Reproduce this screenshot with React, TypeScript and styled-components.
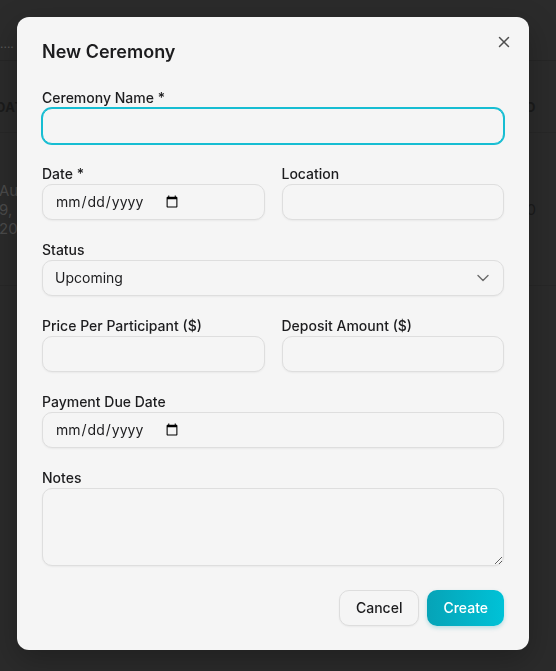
import React, { ReactElement } from "react";
import styled, { createGlobalStyle } from "styled-components";
import { X, ChevronDown } from "lucide-react";

const GlobalStyle = createGlobalStyle`
  html, body {
    margin: 0;
    padding: 0;
    background: #2b2b2b;
    font-family: Inter, "Liberation Sans", sans-serif;
    overflow: hidden;
  }
`;

function Field({
  label,
  children,
}: {
  label: string;
  children: React.ReactNode;
}): ReactElement {
  return (
    <FieldBox>
      <Label>{label}</Label>
      {children}
    </FieldBox>
  );
}

function App(): ReactElement {
  return (
    <>
      <GlobalStyle />
      <Page>
        <TopBar>
          <Dots>....</Dots>
        </TopBar>
        <HeadRow>
          <HeadCell>DATE</HeadCell>
          <HeadCell>PAID</HeadCell>
        </HeadRow>
        <DataRow>
          <DateCell>
            Aug
            <br />
            9,
            <br />
            2025
          </DateCell>
          <NumCell>0</NumCell>
        </DataRow>
      </Page>

      <Overlay>
        <Modal>
          <CloseButton aria-label="Close">
            <X size={18} strokeWidth={2} />
          </CloseButton>
          <Title>New Ceremony</Title>

          <Form>
            <Field label="Ceremony Name *">
              <Input type="text" $focused />
            </Field>

            <Row>
              <Field label="Date *">
                <Input type="date" />
              </Field>
              <Field label="Location">
                <Input type="text" />
              </Field>
            </Row>

            <Field label="Status">
              <SelectWrap>
                <Select defaultValue="upcoming">
                  <option value="upcoming">Upcoming</option>
                  <option value="completed">Completed</option>
                  <option value="cancelled">Cancelled</option>
                </Select>
                <Chevron>
                  <ChevronDown size={20} strokeWidth={1.6} />
                </Chevron>
              </SelectWrap>
            </Field>

            <Row>
              <Field label="Price Per Participant ($)">
                <Input type="text" />
              </Field>
              <Field label="Deposit Amount ($)">
                <Input type="text" />
              </Field>
            </Row>

            <Field label="Payment Due Date">
              <Input type="date" />
            </Field>

            <Field label="Notes">
              <TextArea />
            </Field>
          </Form>

          <Footer>
            <SecondaryButton>Cancel</SecondaryButton>
            <PrimaryButton>Create</PrimaryButton>
          </Footer>
        </Modal>
      </Overlay>
    </>
  );
}

const Page = styled.div`
  height: 671px;
  color: #1b1b1b;
  font-size: 14px;
`;

const TopBar = styled.div`
  height: 61px;
  border-bottom: 1px solid #262626;
  display: flex;
  align-items: flex-end;
  padding-bottom: 10px;
  box-sizing: border-box;
`;

const Dots = styled.span`
  color: #5a5a5a;
  font-size: 12px;
  line-height: 12px;
`;

const HeadRow = styled.div`
  height: 72px;
  box-sizing: border-box;
  padding-top: 20px;
  border-bottom: 1px solid #272727;
  display: flex;
  align-items: center;
  justify-content: space-between;
  margin-left: -4px;
`;

const HeadCell = styled.span`
  font-weight: 700;
  font-size: 13px;
  letter-spacing: 0.5px;
  color: #1b1b1b;

  &:last-child {
    margin-right: 20px;
  }
`;

const DataRow = styled.div`
  height: 152px;
  border-bottom: 1px solid #272727;
  display: flex;
  align-items: center;
  justify-content: space-between;
  margin-left: -1px;
`;

const DateCell = styled.span`
  color: #4a4a4a;
  font-size: 15px;
  line-height: 19px;
`;

const NumCell = styled.span`
  color: #1b1b1b;
  font-size: 15px;
  margin-right: 20px;
`;

const Overlay = styled.div`
  position: fixed;
  inset: 0;
  padding: 17px 0 0 17px;
`;

const Modal = styled.div`
  position: relative;
  width: 512px;
  box-sizing: border-box;
  padding: 24px 25px 24px 25px;
  background: #f5f5f5;
  border-radius: 12px;
  box-shadow: 0 10px 30px rgba(0, 0, 0, 0.25);
`;

const CloseButton = styled.button`
  position: absolute;
  top: 16px;
  right: 16px;
  width: 18px;
  height: 18px;
  padding: 0;
  border: none;
  background: transparent;
  color: #4f4f4f;
  display: flex;
  align-items: center;
  justify-content: center;
  cursor: pointer;
`;

const Title = styled.h2`
  margin: 0;
  font-size: 18px;
  line-height: 21.6px;
  font-weight: 600;
  color: #1c1c1e;
`;

const Form = styled.div`
  margin-top: 25px;
  display: flex;
  flex-direction: column;
  gap: 20px;
`;

const Row = styled.div`
  display: grid;
  grid-template-columns: 1fr 1fr;
  gap: 17px;
`;

const FieldBox = styled.div`
  display: flex;
  flex-direction: column;
  min-width: 0;
`;

const Label = styled.label`
  font-size: 14px;
  line-height: 20px;
  font-weight: 500;
  color: #1c1c1e;
`;

const Input = styled.input<{ $focused?: boolean }>`
  height: 36px;
  box-sizing: border-box;
  width: 100%;
  padding: 0 12px;
  border-radius: 10px;
  border: 1px solid ${(p) => (p.$focused ? "#16bdd2" : "#dedede")};
  box-shadow: ${(p) =>
    p.$focused
      ? "0 0 0 1px #16bdd2"
      : "0 1px 2px rgba(0, 0, 0, 0.05)"};
  background: #f5f5f5;
  font-family: Inter, "Liberation Sans", sans-serif;
  font-size: 14px;
  color: #1c1c1e;
  outline: none;

  &::-webkit-datetime-edit {
    flex: none;
  }

  &::-webkit-calendar-picker-indicator {
    margin-left: 0;
    margin-right: auto;
  }
`;

const SelectWrap = styled.div`
  position: relative;
`;

const Select = styled.select`
  appearance: none;
  -webkit-appearance: none;
  height: 36px;
  box-sizing: border-box;
  width: 100%;
  padding: 0 12px;
  border-radius: 10px;
  border: 1px solid #dedede;
  box-shadow: 0 1px 2px rgba(0, 0, 0, 0.05);
  background: #f5f5f5;
  font-family: Inter, "Liberation Sans", sans-serif;
  font-size: 14px;
  color: #1c1c1e;
  outline: none;
`;

const Chevron = styled.span`
  position: absolute;
  right: 11px;
  top: 8px;
  color: #6a6a6a;
  pointer-events: none;
  display: flex;
`;

const TextArea = styled.textarea`
  height: 78px;
  box-sizing: border-box;
  width: 100%;
  padding: 8px 12px;
  border-radius: 10px;
  border: 1px solid #dedede;
  box-shadow: 0 1px 2px rgba(0, 0, 0, 0.05);
  background: #f5f5f5;
  font-family: Inter, "Liberation Sans", sans-serif;
  font-size: 14px;
  outline: none;
`;

const Footer = styled.div`
  margin-top: 24px;
  display: flex;
  justify-content: flex-end;
  gap: 8px;
`;

const BaseButton = styled.button`
  height: 36px;
  padding: 0 16px;
  border-radius: 10px;
  font-family: Inter, "Liberation Sans", sans-serif;
  font-size: 14px;
  font-weight: 500;
  cursor: pointer;
`;

const SecondaryButton = styled(BaseButton)`
  border: 1px solid #dddddd;
  background: #f5f5f5;
  color: #1c1c1e;
  box-shadow: 0 1px 2px rgba(0, 0, 0, 0.05);
`;

const PrimaryButton = styled(BaseButton)`
  border: none;
  background: linear-gradient(90deg, #06a3b7, #00c2d7);
  color: #ffffff;
  box-shadow: 0 2px 4px rgba(0, 150, 170, 0.25);
`;

export default App;
